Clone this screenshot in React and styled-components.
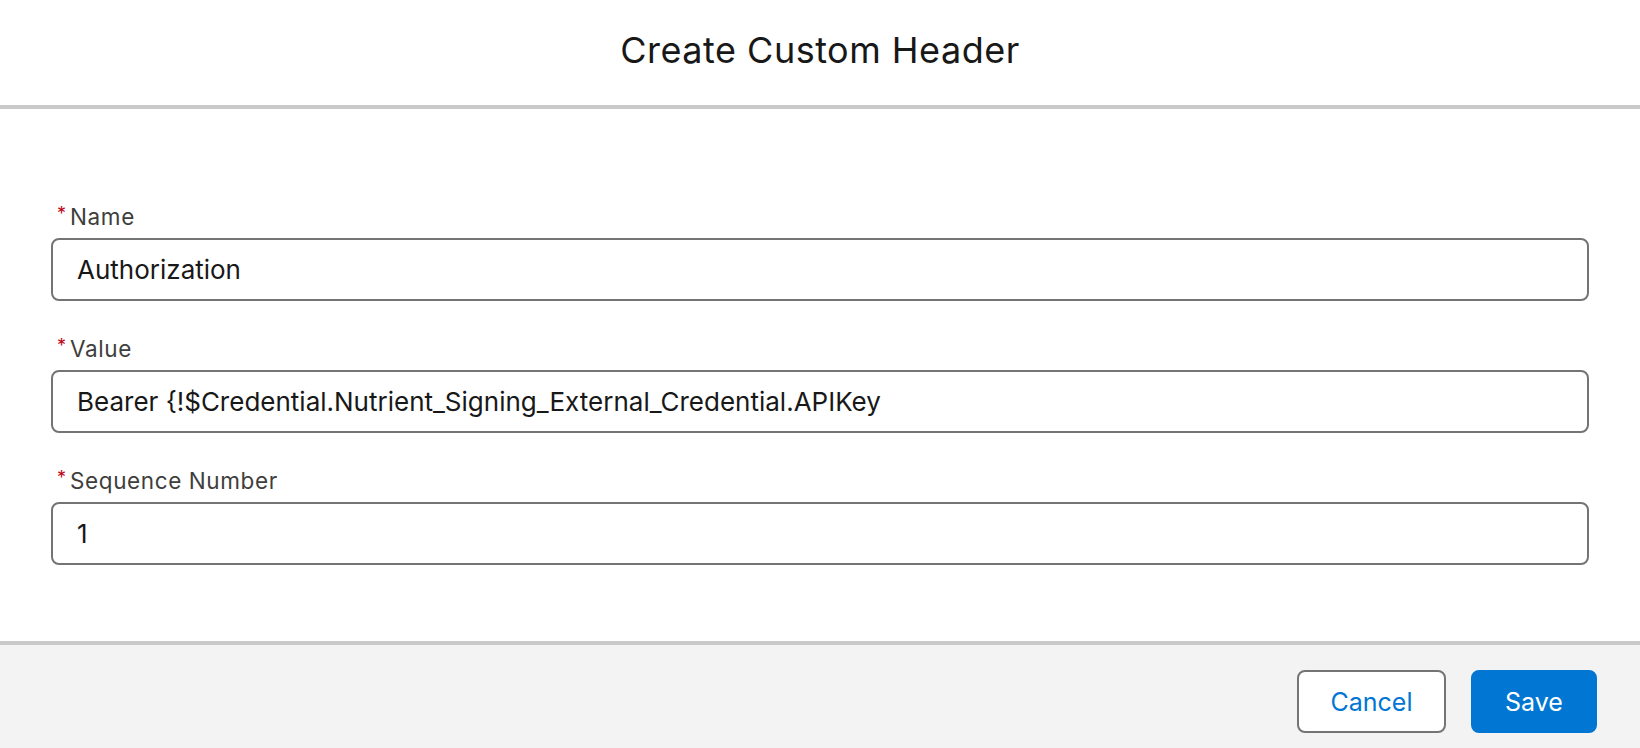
import React from 'react';
import styled, { createGlobalStyle } from 'styled-components';

const GlobalStyle = createGlobalStyle`
  html, body {
    margin: 0;
    padding: 0;
    height: 100%;
  }
  body {
    font-family: Inter, "Liberation Sans", sans-serif;
    background: #ffffff;
  }
  * {
    box-sizing: border-box;
  }
`;

const Modal = styled.div`
  display: flex;
  flex-direction: column;
  height: 100vh;
  background: #ffffff;
`;

const Header = styled.header`
  height: 109px;
  display: flex;
  align-items: center;
  justify-content: center;
  border-bottom: 4px solid #c9c9c9;
  padding-bottom: 6px;
`;

const Title = styled.h2`
  margin: 0;
  font-size: 36px;
  font-weight: 400;
  color: #181818;
  letter-spacing: 0.5px;
`;

const Body = styled.div`
  flex: 1;
  display: flex;
  flex-direction: column;
  gap: 31px;
  padding: 91px 51px 0 51px;
`;

const Field = styled.div`
  display: flex;
  flex-direction: column;
  gap: 6px;
`;

const Label = styled.label`
  display: flex;
  align-items: center;
  height: 32px;
  font-size: 22.5px;
  letter-spacing: 0.6px;
  color: #3e3e3c;
`;

const Required = styled.abbr`
  color: #ba0517;
  text-decoration: none;
  font-size: 18px;
  letter-spacing: 0;
  margin: 0 4px 0 6px;
  align-self: flex-start;
  padding-top: 3px;
`;

const Input = styled.input`
  height: 63px;
  width: 100%;
  border: 2px solid #747474;
  border-radius: 8px;
  padding: 0 24px;
  font-family: inherit;
  font-size: 26px;
  color: #181818;
  background: #ffffff;
  outline: none;
`;

const Footer = styled.footer`
  height: 107px;
  border-top: 4px solid #c9c9c9;
  background: #f3f3f3;
  display: flex;
  align-items: center;
  justify-content: flex-end;
  gap: 25px;
  padding: 10px 43px 0 0;
`;

const Button = styled.button`
  height: 63px;
  min-width: ${({ $width }) => $width}px;
  border-radius: 8px;
  font-family: inherit;
  font-size: 25px;
  cursor: pointer;
  border: 2px solid ${({ $primary }) => ($primary ? '#0176d3' : '#747474')};
  background: ${({ $primary }) => ($primary ? '#0176d3' : '#ffffff')};
  color: ${({ $primary }) => ($primary ? '#ffffff' : '#0176d3')};
`;

const fields = [
  { id: 'name', label: 'Name', value: 'Authorization' },
  { id: 'value', label: 'Value', value: 'Bearer {!$Credential.Nutrient_Signing_External_Credential.APIKey' },
  { id: 'seq', label: 'Sequence Number', value: '1' },
];

export default function App() {
  return (
    <>
      <GlobalStyle />
      <Modal>
        <Header>
          <Title>Create Custom Header</Title>
        </Header>
        <Body>
          {fields.map((f) => (
            <Field key={f.id}>
              <Label htmlFor={f.id}>
                <Required title="required">*</Required>
                {f.label}
              </Label>
              <Input id={f.id} defaultValue={f.value} />
            </Field>
          ))}
        </Body>
        <Footer>
          <Button $width={149}>Cancel</Button>
          <Button $width={126} $primary>Save</Button>
        </Footer>
      </Modal>
    </>
  );
}
